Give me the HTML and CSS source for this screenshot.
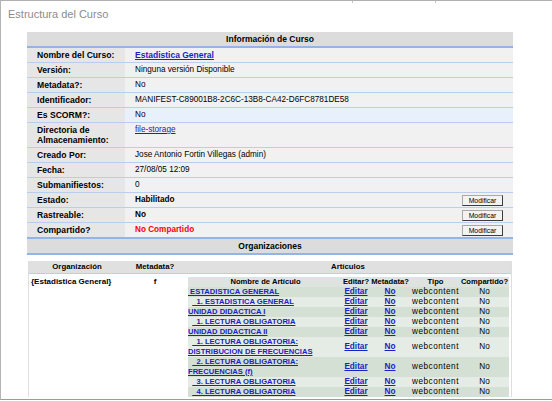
FILE: index.html
```html
<!DOCTYPE html>
<html lang="es">
<head>
<meta charset="utf-8">
<title>Estructura del Curso</title>
<link rel="stylesheet" href="styles.css">
</head>
<body>
<div class="frame">
  <div class="tabs"><span class="tab-a"></span><span class="tab-b"></span><span class="tab-c"></span></div>
  <h1 class="title">Estructura del Curso</h1>
  <table class="info">
    <colgroup><col class="c-lbl"><col class="c-val"></colgroup>
    <tr><th colspan="2" class="sect">Información de Curso</th></tr>
    <tr><td class="lbl">Nombre del Curso:</td><td class="val"><a href="#" class="main-link">Estadistica General</a></td></tr>
    <tr><td class="lbl">Versión:</td><td class="val">Ninguna versión Disponible</td></tr>
    <tr><td class="lbl">Metadata?:</td><td class="val">No</td></tr>
    <tr><td class="lbl">Identificador:</td><td class="val">MANIFEST-C89001B8-2C6C-13B8-CA42-D6FC8781DE58</td></tr>
    <tr><td class="lbl">Es SCORM?:</td><td class="val val-blue">No</td></tr>
    <tr><td class="lbl lbl-tall">Directoria de Almacenamiento:</td><td class="val val-top"><a href="#" class="plain-link">file-storage</a></td></tr>
    <tr><td class="lbl">Creado Por:</td><td class="val">Jose Antonio Fortin Villegas (admin)</td></tr>
    <tr><td class="lbl">Fecha:</td><td class="val">27/08/05 12:09</td></tr>
    <tr><td class="lbl">Submanifiestos:</td><td class="val">0</td></tr>
    <tr><td class="lbl">Estado:</td><td class="val"><div class="vrow"><b>Habilitado</b><button class="btn">Modificar</button></div></td></tr>
    <tr><td class="lbl">Rastreable:</td><td class="val"><div class="vrow"><b>No</b><button class="btn">Modificar</button></div></td></tr>
    <tr><td class="lbl last">Compartido?</td><td class="val last"><div class="vrow"><b class="red">No Compartido</b><button class="btn">Modificar</button></div></td></tr>
    <tr><th colspan="2" class="sect sect2">Organizaciones</th></tr>
    <tr>
      <td colspan="2" class="orgcell">
        <table class="org">
          <colgroup><col class="oc1"><col class="oc2"><col class="oc3"></colgroup>
          <tr><th>Organización</th><th>Metadata?</th><th>Artículos</th></tr>
          <tr>
            <td class="oname">{Estadistica General}</td>
            <td class="ometa">f</td>
            <td class="arts">
              <table class="art">
                <colgroup><col class="a1"><col class="a2"><col class="a3"><col class="a4"><col class="a5"></colgroup>
                <tr class="ah"><th>Nombre de Artículo</th><th>Editar?</th><th>Metadata?</th><th>Tipo</th><th>Compartido?</th></tr>
                <tr class="dk"><td class="nm"><a href="#">&nbsp;ESTADISTICA GENERAL</a></td><td><a href="#">Editar</a></td><td><a href="#">No</a></td><td class="wc">webcontent</td><td>No</td></tr>
                <tr class="lt"><td class="nm">&nbsp;&nbsp;<a href="#">&nbsp;&nbsp;1. ESTADISTICA GENERAL</a></td><td><a href="#">Editar</a></td><td><a href="#">No</a></td><td class="wc">webcontent</td><td>No</td></tr>
                <tr class="dk"><td class="nm"><a href="#">UNIDAD DIDACTICA I</a></td><td><a href="#">Editar</a></td><td><a href="#">No</a></td><td class="wc">webcontent</td><td>No</td></tr>
                <tr class="lt"><td class="nm">&nbsp;&nbsp;<a href="#">&nbsp;&nbsp;1. LECTURA OBLIGATORIA</a></td><td><a href="#">Editar</a></td><td><a href="#">No</a></td><td class="wc">webcontent</td><td>No</td></tr>
                <tr class="dk"><td class="nm"><a href="#">UNIDAD DIDACTICA II</a></td><td><a href="#">Editar</a></td><td><a href="#">No</a></td><td class="wc">webcontent</td><td>No</td></tr>
                <tr class="lt"><td class="nm">&nbsp;&nbsp;<a href="#">&nbsp;&nbsp;1. LECTURA OBLIGATORIA: DISTRIBUCION DE FRECUENCIAS</a></td><td><a href="#">Editar</a></td><td><a href="#">No</a></td><td class="wc">webcontent</td><td>No</td></tr>
                <tr class="dk"><td class="nm">&nbsp;&nbsp;<a href="#">&nbsp;&nbsp;2. LECTURA OBLIGATORIA: FRECUENCIAS (f)</a></td><td><a href="#">Editar</a></td><td><a href="#">No</a></td><td class="wc">webcontent</td><td>No</td></tr>
                <tr class="lt"><td class="nm">&nbsp;&nbsp;<a href="#">&nbsp;&nbsp;3. LECTURA OBLIGATORIA</a></td><td><a href="#">Editar</a></td><td><a href="#">No</a></td><td class="wc">webcontent</td><td>No</td></tr>
                <tr class="dk"><td class="nm">&nbsp;&nbsp;<a href="#">&nbsp;&nbsp;4. LECTURA OBLIGATORIA</a></td><td><a href="#">Editar</a></td><td><a href="#">No</a></td><td class="wc">webcontent</td><td>No</td></tr>
              </table>
            </td>
          </tr>
        </table>
      </td>
    </tr>
  </table>
</div>
</body>
</html>
```
FILE: styles.css
```css
html, body {
  margin: 0;
  padding: 0;
  background: #fff;
}
body {
  font-family: "Liberation Sans", Arial, sans-serif;
  font-size: 8.2px;
  color: #000;
}
.frame {
  box-sizing: border-box;
  height: 400px;
  overflow: hidden;
  border-left: 1px solid #b4b4b4;
  border-bottom: 1px solid #7d9fdc;
}
.tabs {
  display: flex;
  height: 2px;
  border-top: 1px solid #b0b0b0;
}
.tab-a { width: 351px; }
.tab-b { width: 82px; border-left: 1px solid #c4c4c4; }
.tab-c { flex: 1; border-left: 1px solid #c4c4c4; }
.title {
  margin: 5px 0 11px 7px;
  font-size: 11px;
  line-height: 13px;
  font-weight: normal;
  color: #8c8c8c;
}
a { color: #1a22c4; }

/* info table */
.info {
  margin-left: 26px;
  width: 486px;
  table-layout: fixed;
  border-collapse: separate;
  border-spacing: 0;
}
.c-lbl { width: 98px; }
.c-val { width: 388px; }
.info th.sect {
  height: 14px;
  padding: 0;
  background: #dcdcdc;
  border-bottom: 2px solid #94b4e6;
  font-size: 8.5px;
  line-height: 10px;
  font-weight: bold;
  text-align: center;
}
.info th.sect2 { border-top: 2px solid #94b4e6; }
.info td {
  height: 14px;
  padding: 0 0 0 10px;
  border-bottom: 1px solid #b9cdec;
  line-height: 10px;
  vertical-align: middle;
}
.info td.last { border-bottom: 0; }
.info td.lbl {
  background: #e6e6e6;
  font-weight: bold;
  font-size: 8.6px;
}
.info td.lbl-tall { height: 24px; }
.info td.val { background: #f1f1f1; }
.info td.val-blue { background: #e8f0fc; }
.info td.val-top { vertical-align: top; padding-top: 2px; }
.main-link { font-weight: bold; font-size: 8.5px; }
.vrow {
  display: flex;
  justify-content: space-between;
  align-items: center;
  padding-right: 10px;
}
.red { color: #f00; }
.btn {
  -webkit-appearance: none;
  appearance: none;
  box-sizing: border-box;
  width: 41px;
  height: 11px;
  padding: 0;
  margin: 0;
  font-family: inherit;
  font-size: 6.8px;
  line-height: 9px;
  color: #000;
  background: #f3f3f3;
  border: 1px solid;
  border-color: #a8a8a8 #3c3c3c #3c3c3c #a8a8a8;
}

/* organizations */
.info td.orgcell {
  height: auto;
  padding: 6px 1px 0;
  border-bottom: 0;
  background: #fff;
  vertical-align: top;
}
.org {
  width: 484px;
  table-layout: fixed;
  border-collapse: separate;
  border-spacing: 0;
  border-left: 1px solid #dedede;
  border-right: 1px solid #dedede;
}
.oc1 { width: 96px; }
.oc2 { width: 60px; }
.oc3 { width: 326px; }
.org > tbody > tr > th, .org > tr > th {
  height: 12px;
  padding: 0;
  background: #e0e0e0;
  border-bottom: 1px solid #b9cdec;
  font-size: 7.8px;
  line-height: 10px;
  font-weight: bold;
  text-align: center;
}
.info .org td {
  height: auto;
  border-bottom: 0;
  vertical-align: top;
  line-height: 10px;
  padding: 3px 0 0 0;
}
.info .org td.oname { padding-left: 2px; font-weight: bold; font-size: 8px; }
.info .org td.ometa { text-align: center; font-weight: bold; font-size: 8px; }
.info .org td.arts { padding: 3px 2px 0 3px; }

/* articles */
.art {
  width: 321px;
  table-layout: fixed;
  border-collapse: separate;
  border-spacing: 0;
}
.a1 { width: 155px; }
.a2 { width: 26px; }
.a3 { width: 42px; }
.a4 { width: 49px; }
.a5 { width: 49px; }
.art th {
  height: 10px;
  padding: 0;
  background: #dfe3df;
  font-size: 7.6px;
  line-height: 10px;
  font-weight: bold;
  text-align: center;
  white-space: nowrap;
}
.info .org .art td {
  padding: 0;
  line-height: 10px;
  text-align: center;
  vertical-align: middle;
  font-size: 8.2px;
}
.info .org .art td.nm {
  text-align: left;
  font-size: 7.6px;
}
.art a { font-weight: bold; }
.art td.wc { letter-spacing: 0.5px; }
.art tr.dk td { background: #d3e0d3; }
.art tr.lt td { background: #e5ece5; }
```
